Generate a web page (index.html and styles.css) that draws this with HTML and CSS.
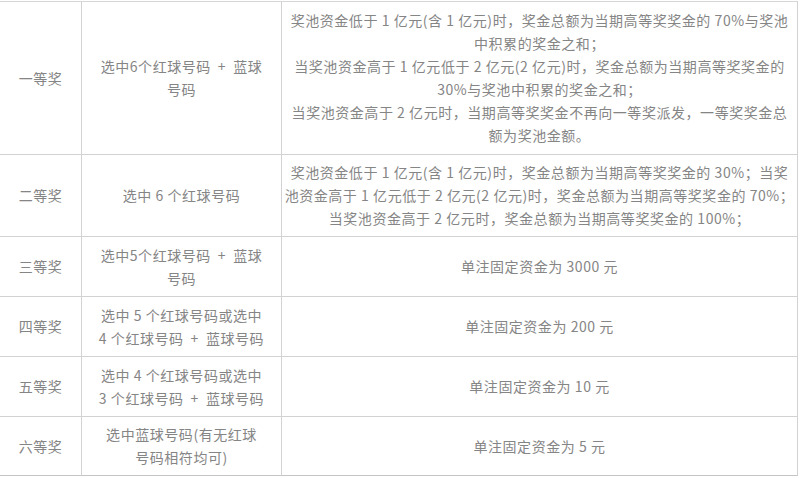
FILE: index.html
```html
<!DOCTYPE html>
<html lang="zh-CN">
<head>
<meta charset="utf-8">
<title>双色球奖级设置</title>
<link rel="stylesheet" href="styles.css">
</head>
<body>
<table class="prize">
  <colgroup><col class="c-level"><col class="c-rule"><col class="c-money"></colgroup>
  <tbody>
    <tr class="r-first">
      <td>一等奖</td>
      <td>选中6个红球号码<span class="plus">+</span>蓝球<br>号码</td>
      <td>奖池资金低于 1 亿元(含 1 亿元)时，奖金总额为当期高等奖奖金的 70%与奖池<br>中积累的奖金之和；<br>当奖池资金高于 1 亿元低于 2 亿元(2 亿元)时，奖金总额为当期高等奖奖金的<br>30%与奖池中积累的奖金之和；<br>当奖池资金高于 2 亿元时，当期高等奖奖金不再向一等奖派发，一等奖奖金总<br>额为奖池金额。</td>
    </tr>
    <tr class="r-second">
      <td>二等奖</td>
      <td>选中 6 个红球号码</td>
      <td>奖池资金低于 1 亿元(含 1 亿元)时，奖金总额为当期高等奖奖金的 30%；当奖<br>池资金高于 1 亿元低于 2 亿元(2 亿元)时，奖金总额为当期高等奖奖金的 70%；<br>当奖池资金高于 2 亿元时，奖金总额为当期高等奖奖金的 100%；</td>
    </tr>
    <tr class="r-std">
      <td>三等奖</td>
      <td>选中5个红球号码<span class="plus">+</span>蓝球<br>号码</td>
      <td>单注固定资金为 3000 元</td>
    </tr>
    <tr class="r-std">
      <td>四等奖</td>
      <td>选中 5 个红球号码或选中<br>4 个红球号码<span class="plus">+</span>蓝球号码</td>
      <td>单注固定资金为 200 元</td>
    </tr>
    <tr class="r-std">
      <td>五等奖</td>
      <td>选中 4 个红球号码或选中<br>3 个红球号码<span class="plus">+</span>蓝球号码</td>
      <td>单注固定资金为 10 元</td>
    </tr>
    <tr class="r-last">
      <td>六等奖</td>
      <td>选中蓝球号码(有无红球<br>号码相符均可)</td>
      <td>单注固定资金为 5 元</td>
    </tr>
  </tbody>
</table>
</body>
</html>
```
FILE: styles.css
```css
html, body {
  margin: 0;
  padding: 0;
  background: #ffffff;
}

body {
  font-family: "Noto Sans CJK SC", "Liberation Sans", sans-serif;
}

.prize {
  border-collapse: separate;
  border-spacing: 0;
  table-layout: fixed;
  width: 798px;
  margin-top: 1px;
  border-top: 1px solid #d6d6d6;
  font-size: 14px;
  line-height: 23px;
  letter-spacing: 0.55px;
  color: #858585;
}

.c-level { width: 82px; }
.c-rule { width: 200px; }
.c-money { width: 516px; }

.prize td {
  border-bottom: 1px solid #d2d2d2;
  border-right: 1px solid #d2d2d2;
  padding: 0 2px;
  text-align: center;
  vertical-align: middle;
  white-space: nowrap;
}

.plus {
  margin: 0 7px;
}

.r-first { height: 153px; }
.r-second { height: 82px; }
.r-std { height: 60px; }
.r-last { height: 59px; }

.r-last td {
  border-bottom-color: #c4c4c4;
}
```
